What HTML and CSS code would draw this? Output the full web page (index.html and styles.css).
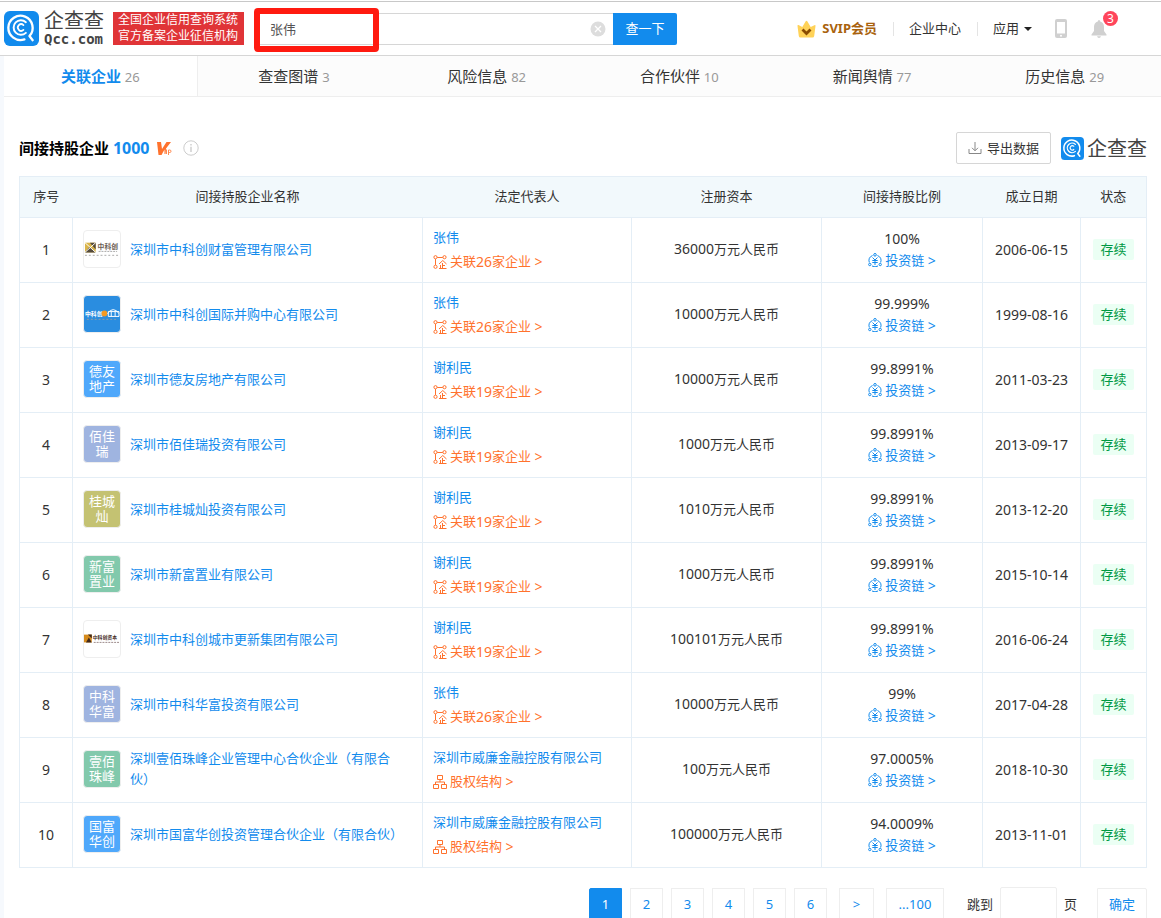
FILE: index.html
```
<!DOCTYPE html>
<html lang="zh-CN">
<head>
  <meta charset="UTF-8">
  <meta name="viewport" content="width=device-width, initial-scale=1.0">
  <title>张伟 - 企查查</title>
  <link rel="stylesheet" href="styles.css">
</head>
<body>
  <svg class="sprite" aria-hidden="true">
    <symbol id="icon-qcc" viewBox="0 0 36 36">
      <rect width="36" height="36" rx="6" fill="#128bed"/>
      <g fill="none" stroke="#fff" stroke-linecap="round">
        <path d="M21 29.200A12.500 12.500 0 1 1 26.200 25.800L29.500 30" stroke-width="2.400" stroke-linejoin="round"/>
        <path d="M22.500 22.500A7.500 7.500 0 1 1 22.500 11.500" stroke-width="2"/>
        <path d="M20 19.500A3.400 3.400 0 1 1 20 14.500" stroke-width="1.800"/>
      </g>
    </symbol>
    <symbol id="icon-relation" viewBox="0 0 14 14">
      <g fill="none" stroke="currentColor">
        <circle cx="2.500" cy="2.200" r="1.600"/>
        <circle cx="11.500" cy="2.200" r="1.600"/>
        <circle cx="2.500" cy="11.800" r="1.600"/>
        <path d="M4.200 2.500H9.800M2.500 4V10M6 9L9.800 5.500L13.500 9M9.500 8V13M9.500 10.500H12M7.500 10V13M6 13.500H13.500"/>
      </g>
    </symbol>
    <symbol id="icon-chain" viewBox="0 0 14 14">
      <g fill="none" stroke="currentColor">
        <path d="M4.500 2.500A5.800 5.800 0 0 0 1.300 9.500M9.500 2.500A5.800 5.800 0 0 1 12.700 9.500M4 13A6 6 0 0 0 10 13"/>
        <circle cx="7" cy="1.800" r="1.300"/>
        <circle cx="1.800" cy="11.500" r="1.200"/>
        <circle cx="12.200" cy="11.500" r="1.200"/>
        <path d="M4.500 4.500L7 7L9.500 4.500M4.300 7.500H9.700M4.300 9.500H9.700M7 7V12"/>
      </g>
    </symbol>
    <symbol id="icon-structure" viewBox="0 0 14 14">
      <path d="M4.500 .5H9.500V4.500H4.500ZM.5 9.500H5.500V13.500H.5ZM8.500 9.500H13.500V13.500H8.500ZM7 4.500V7M2.500 9.500V7H11.500V9.500" fill="none" stroke="currentColor"/>
    </symbol>
  </svg>

  <header class="header">
    <a class="brand" href="#">
      <svg class="brand-icon"><use href="#icon-qcc"/></svg>
      <span class="brand-name">企查查<span class="brand-domain">Qcc.com</span></span>
    </a>
    <div class="slogan">全国企业信用查询系统<br>官方备案企业征信机构</div>

    <form class="search">
      <input class="search-input" type="text" value="张伟" aria-label="搜索">
      <button class="search-clear" type="reset" aria-label="清空">
        <svg viewBox="0 0 16 16"><circle cx="8" cy="8" r="7.500" fill="#ddd"/><path d="M5 5L11 11M11 5L5 11" stroke="#fff" stroke-width="1.300"/></svg>
      </button>
      <button class="search-btn" type="submit">查一下</button>
      <span class="search-mark"></span>
    </form>

    <nav class="nav">
      <a class="nav-vip" href="#">
        <svg viewBox="0 0 19 18">
          <path d="M1.500 5Q.2 4.800 .5 6L1.800 16Q2 17.500 3.500 17.500H15.500Q17 17.500 17.200 16L18.500 6Q18.700 4.700 17.400 5.200L13.700 7L10.300 1.200Q9.500 .3 8.700 1.200L5.300 7Z" fill="#ffd258"/>
          <path d="M5.500 9.500L9.500 13.500L13.500 9.500" fill="none" stroke="#8a4b00" stroke-width="2.800"/>
        </svg>
        SVIP会员
      </a>
      <a class="nav-item" href="#">企业中心</a>
      <a class="nav-item" href="#">应用<i class="caret"></i></a>
      <a class="nav-phone" href="#" aria-label="手机版">
        <svg viewBox="0 0 12 19"><rect width="12" height="19" rx="2" fill="#d0d0d0"/><path d="M2 3H10V14.500H2Z" fill="#fff"/><circle cx="6" cy="16.700" r="1" fill="#fff"/></svg>
      </a>
      <a class="nav-bell" href="#" aria-label="消息">
        <svg viewBox="0 0 16 18"><path d="M8 0Q9.200 0 9.200 1.500Q13 2.600 13 7V11L15.500 14.500V15.500H.5V14.500L3 11V7Q3 2.600 6.800 1.500Q6.800 0 8 0ZM6 16.300H10Q9.500 18 8 18Q6.500 18 6 16.300Z" fill="#d0d0d0"/></svg>
        <span class="badge">3</span>
      </a>
    </nav>
  </header>

  <div class="page">
    <nav class="tabs">
      <a class="tab active" href="#">关联企业 <span>26</span></a>
      <a class="tab" href="#">查查图谱 <span>3</span></a>
      <a class="tab" href="#">风险信息 <span>82</span></a>
      <a class="tab" href="#">合作伙伴 <span>10</span></a>
      <a class="tab" href="#">新闻舆情 <span>77</span></a>
      <a class="tab" href="#">历史信息 <span>29</span></a>
    </nav>

    <main class="content">
      <div class="title-row">
        <h2 class="title">间接持股企业 <span class="total">1000</span></h2>
        <svg class="vip-icon" viewBox="0 0 15 15">
          <path d="M0 1H4L5 8L9.500 1H14L9 7.500L8.500 13H7.500V8.500L4.500 14H1.500Z" fill="#ff722d"/>
          <path d="M9.500 8.500V13M11.500 14V9H12.800Q14 9 14 10.300Q14 11.500 12.800 11.500H11.500" fill="none" stroke="#ff8a50"/>
        </svg>
        <svg class="info-icon" viewBox="0 0 16 16">
          <circle cx="8" cy="8" r="7.200" fill="none" stroke="#ccc"/>
          <path d="M8 4V5.500M8 6.800V12" stroke="#ccc" stroke-width="1.400"/>
        </svg>
        <button class="export" type="button">
          <svg viewBox="0 0 14 14"><path d="M1 8V12.500H13V8M7 1V9.500M4 6.800L7 9.800L10 6.800" fill="none" stroke="#888"/></svg>
          导出数据
        </button>
        <div class="watermark"><svg><use href="#icon-qcc"/></svg>企查查</div>
      </div>

      <table class="table">
        <colgroup>
          <col class="col-index"><col><col class="col-person"><col class="col-capital">
          <col class="col-ratio"><col class="col-date"><col class="col-status">
        </colgroup>
        <thead>
          <tr>
            <th>序号</th>
            <th>间接持股企业名称</th>
            <th>法定代表人</th>
            <th>注册资本</th>
            <th>间接持股比例</th>
            <th>成立日期</th>
            <th>状态</th>
          </tr>
        </thead>
        <tbody>
          <tr>
            <td class="num">1</td>
            <td><div class="company">
              <span class="logo logo-image">
                <svg viewBox="0 0 37 37">
                  <rect x="1" y="12" width="11" height="10" fill="#d9b44a"/>
                  <path d="M1 22L6 16L12 22ZM6 12L12 19V12Z" fill="#554b3c"/>
                  <path d="M1 12L12 22M12 12L1 22" stroke="#fff"/>
                  <text x="14" y="18" font-size="7" font-weight="700" fill="#6c6055">中科创</text>
                  <path d="M15 21H34" stroke="#aaa" stroke-dasharray="2 1"/>
                  <path d="M1 25H35" stroke="#aaa" stroke-dasharray="2 2"/>
                </svg>
              </span>
              <a href="#">深圳市中科创财富管理有限公司</a>
            </div></td>
            <td class="person"><a href="#">张伟</a><a class="more" href="#"><svg><use href="#icon-relation"/></svg>关联<span class="num">26</span>家企业 <span class="num">&gt;</span></a></td>
            <td><span class="num">36000</span>万元人民币</td>
            <td class="ratio"><span class="num">100%</span><a href="#"><svg><use href="#icon-chain"/></svg>投资链 <span class="num">&gt;</span></a></td>
            <td class="num">2006-06-15</td>
            <td><span class="tag">存续</span></td>
          </tr>
          <tr>
            <td class="num">2</td>
            <td><div class="company">
              <span class="logo logo-navy">
                <svg viewBox="0 0 37 37">
                  <text x="1" y="21" font-size="6" font-weight="700" fill="#fff">中科创</text>
                  <circle cx="21" cy="18" r="3" fill="#f59a23"/>
                  <path d="M24 18Q30 10 36 18M25 16H36V21H25ZM28 16V21M32 16V21" fill="none" stroke="#fff"/>
                  <path d="M3 24H35" stroke="#8b9ba5" stroke-dasharray="2 2"/>
                </svg>
              </span>
              <a href="#">深圳市中科创国际并购中心有限公司</a>
            </div></td>
            <td class="person"><a href="#">张伟</a><a class="more" href="#"><svg><use href="#icon-relation"/></svg>关联<span class="num">26</span>家企业 <span class="num">&gt;</span></a></td>
            <td><span class="num">10000</span>万元人民币</td>
            <td class="ratio"><span class="num">99.999%</span><a href="#"><svg><use href="#icon-chain"/></svg>投资链 <span class="num">&gt;</span></a></td>
            <td class="num">1999-08-16</td>
            <td><span class="tag">存续</span></td>
          </tr>
          <tr>
            <td class="num">3</td>
            <td><div class="company"><span class="logo logo-blue">德友<br>地产</span><a href="#">深圳市德友房地产有限公司</a></div></td>
            <td class="person"><a href="#">谢利民</a><a class="more" href="#"><svg><use href="#icon-relation"/></svg>关联<span class="num">19</span>家企业 <span class="num">&gt;</span></a></td>
            <td><span class="num">10000</span>万元人民币</td>
            <td class="ratio"><span class="num">99.8991%</span><a href="#"><svg><use href="#icon-chain"/></svg>投资链 <span class="num">&gt;</span></a></td>
            <td class="num">2011-03-23</td>
            <td><span class="tag">存续</span></td>
          </tr>
          <tr>
            <td class="num">4</td>
            <td><div class="company"><span class="logo logo-purple">佰佳<br>瑞</span><a href="#">深圳市佰佳瑞投资有限公司</a></div></td>
            <td class="person"><a href="#">谢利民</a><a class="more" href="#"><svg><use href="#icon-relation"/></svg>关联<span class="num">19</span>家企业 <span class="num">&gt;</span></a></td>
            <td><span class="num">1000</span>万元人民币</td>
            <td class="ratio"><span class="num">99.8991%</span><a href="#"><svg><use href="#icon-chain"/></svg>投资链 <span class="num">&gt;</span></a></td>
            <td class="num">2013-09-17</td>
            <td><span class="tag">存续</span></td>
          </tr>
          <tr>
            <td class="num">5</td>
            <td><div class="company"><span class="logo logo-olive">桂城<br>灿</span><a href="#">深圳市桂城灿投资有限公司</a></div></td>
            <td class="person"><a href="#">谢利民</a><a class="more" href="#"><svg><use href="#icon-relation"/></svg>关联<span class="num">19</span>家企业 <span class="num">&gt;</span></a></td>
            <td><span class="num">1010</span>万元人民币</td>
            <td class="ratio"><span class="num">99.8991%</span><a href="#"><svg><use href="#icon-chain"/></svg>投资链 <span class="num">&gt;</span></a></td>
            <td class="num">2013-12-20</td>
            <td><span class="tag">存续</span></td>
          </tr>
          <tr>
            <td class="num">6</td>
            <td><div class="company"><span class="logo logo-green">新富<br>置业</span><a href="#">深圳市新富置业有限公司</a></div></td>
            <td class="person"><a href="#">谢利民</a><a class="more" href="#"><svg><use href="#icon-relation"/></svg>关联<span class="num">19</span>家企业 <span class="num">&gt;</span></a></td>
            <td><span class="num">1000</span>万元人民币</td>
            <td class="ratio"><span class="num">99.8991%</span><a href="#"><svg><use href="#icon-chain"/></svg>投资链 <span class="num">&gt;</span></a></td>
            <td class="num">2015-10-14</td>
            <td><span class="tag">存续</span></td>
          </tr>
          <tr>
            <td class="num">7</td>
            <td><div class="company">
              <span class="logo logo-image">
                <svg viewBox="0 0 37 37">
                  <path d="M0 14H8V22H0Z" fill="#d58a1c"/>
                  <path d="M2 22L5 17L8 22ZM4 14L8 18V14Z" fill="#40291c"/>
                  <text x="9" y="19" font-size="5" font-weight="700" fill="#40291c">中科创资本</text>
                  <path d="M10 22H37" stroke="#988" stroke-dasharray="2 1"/>
                </svg>
              </span>
              <a href="#">深圳市中科创城市更新集团有限公司</a>
            </div></td>
            <td class="person"><a href="#">谢利民</a><a class="more" href="#"><svg><use href="#icon-relation"/></svg>关联<span class="num">19</span>家企业 <span class="num">&gt;</span></a></td>
            <td><span class="num">100101</span>万元人民币</td>
            <td class="ratio"><span class="num">99.8991%</span><a href="#"><svg><use href="#icon-chain"/></svg>投资链 <span class="num">&gt;</span></a></td>
            <td class="num">2016-06-24</td>
            <td><span class="tag">存续</span></td>
          </tr>
          <tr>
            <td class="num">8</td>
            <td><div class="company"><span class="logo logo-purple">中科<br>华富</span><a href="#">深圳市中科华富投资有限公司</a></div></td>
            <td class="person"><a href="#">张伟</a><a class="more" href="#"><svg><use href="#icon-relation"/></svg>关联<span class="num">26</span>家企业 <span class="num">&gt;</span></a></td>
            <td><span class="num">10000</span>万元人民币</td>
            <td class="ratio"><span class="num">99%</span><a href="#"><svg><use href="#icon-chain"/></svg>投资链 <span class="num">&gt;</span></a></td>
            <td class="num">2017-04-28</td>
            <td><span class="tag">存续</span></td>
          </tr>
          <tr>
            <td class="num">9</td>
            <td><div class="company"><span class="logo logo-green">壹佰<br>珠峰</span><a href="#">深圳壹佰珠峰企业管理中心合伙企业（有限合伙）</a></div></td>
            <td class="person"><a href="#">深圳市威廉金融控股有限公司</a><a class="more" href="#"><svg><use href="#icon-structure"/></svg>股权结构 <span class="num">&gt;</span></a></td>
            <td><span class="num">100</span>万元人民币</td>
            <td class="ratio"><span class="num">97.0005%</span><a href="#"><svg><use href="#icon-chain"/></svg>投资链 <span class="num">&gt;</span></a></td>
            <td class="num">2018-10-30</td>
            <td><span class="tag">存续</span></td>
          </tr>
          <tr>
            <td class="num">10</td>
            <td><div class="company"><span class="logo logo-blue">国富<br>华创</span><a href="#">深圳市国富华创投资管理合伙企业（有限合伙）</a></div></td>
            <td class="person"><a href="#">深圳市威廉金融控股有限公司</a><a class="more" href="#"><svg><use href="#icon-structure"/></svg>股权结构 <span class="num">&gt;</span></a></td>
            <td><span class="num">100000</span>万元人民币</td>
            <td class="ratio"><span class="num">94.0009%</span><a href="#"><svg><use href="#icon-chain"/></svg>投资链 <span class="num">&gt;</span></a></td>
            <td class="num">2013-11-01</td>
            <td><span class="tag">存续</span></td>
          </tr>
        </tbody>
      </table>

      <div class="pagination">
        <a class="page-link current" href="#">1</a>
        <a class="page-link" href="#">2</a>
        <a class="page-link" href="#">3</a>
        <a class="page-link" href="#">4</a>
        <a class="page-link" href="#">5</a>
        <a class="page-link" href="#">6</a>
        <a class="page-link page-next" href="#">&gt;</a>
        <a class="page-link page-last" href="#">...100</a>
        <label class="jump">跳到 <input type="text"> 页</label>
        <button class="page-link page-go" type="button">确定</button>
      </div>
    </main>
  </div>
</body>
</html>
```
FILE: styles.css
```
:root {
  --primary: #128bed;
  --orange: #ff722d;
  --line: #e4eef6;
  --border: #d6d6d6;
  --text: #333;
}

* {
  margin: 0;
  padding: 0;
  box-sizing: border-box;
}

html {
  scrollbar-width: none;
}

body {
  font-family: "Noto Sans", "Noto Sans CJK SC", sans-serif;
  font-size: 13px;
  line-height: 21px;
  color: var(--text);
  background: #fff;
}

a {
  color: var(--primary);
  text-decoration: none;
}

button,
input {
  font: inherit;
  color: inherit;
}

button {
  cursor: pointer;
}

svg {
  display: block;
  flex: none;
}

.sprite {
  position: absolute;
  width: 0;
  height: 0;
}

/* header */
.header {
  display: flex;
  align-items: center;
  height: 55px;
  margin-top: 1px;
  padding: 0 54px 0 4px;
  border-top: 1px solid #c8c8c8;
  border-bottom: 1px solid var(--border);
}

.brand {
  display: flex;
  align-items: center;
  gap: 5px;
  color: #444;
}

.brand-icon {
  width: 35px;
  height: 35px;
}

.brand-name {
  font-size: 20px;
  line-height: 20px;
}

.brand-domain {
  display: block;
  font: bold 14px/16px "DejaVu Sans Mono", monospace;
}

.slogan {
  margin-left: 9px;
  padding: 0 6px 1px 5px;
  background: #e03437;
  color: #fff;
  font-size: 12px;
  line-height: 16px;
}

.search {
  position: relative;
  display: flex;
  width: 420px;
  margin-left: 13px;
}

.search-input {
  flex: 1;
  min-width: 0;
  height: 32px;
  padding: 0 12px;
  border: 1px solid var(--border);
  border-right: 0;
  outline: 0;
  color: #555;
}

.search-clear {
  position: absolute;
  top: 8px;
  right: 71px;
  width: 16px;
  height: 16px;
  border: 0;
  background: none;
}

.search-btn {
  width: 64px;
  height: 32px;
  border: 0;
  border-radius: 0 2px 2px 0;
  background: var(--primary);
  color: #fff;
}

/* highlight drawn around the keyword */
.search-mark {
  position: absolute;
  top: -5px;
  left: -3px;
  width: 125px;
  height: 44px;
  border: 6px solid #ff1a10;
  border-radius: 4px;
  pointer-events: none;
}

.nav {
  display: flex;
  align-items: center;
  margin-left: auto;
}

.nav-vip {
  display: flex;
  align-items: center;
  gap: 6px;
  color: #a9620d;
  font-weight: bold;
}

.nav-vip svg {
  width: 19px;
  height: 18px;
}

.nav-item {
  display: flex;
  align-items: center;
  position: relative;
  margin-left: 32px;
  color: var(--text);
}

.nav-item::before {
  content: "";
  position: absolute;
  left: -16px;
  width: 1px;
  height: 14px;
  background: #e4e4e4;
}

.caret {
  margin-left: 5px;
  border: 4px solid transparent;
  border-top-color: #222;
  border-bottom: 0;
}

.nav-phone {
  margin-left: 23px;
}

.nav-phone svg {
  width: 12px;
  height: 19px;
}

.nav-bell {
  position: relative;
  margin-left: 24px;
}

.nav-bell svg {
  width: 16px;
  height: 18px;
}

.badge {
  position: absolute;
  top: -9px;
  right: -11px;
  width: 15px;
  height: 15px;
  border-radius: 50%;
  background: #ff455b;
  color: #fff;
  font-size: 12px;
  line-height: 15px;
  text-align: center;
}

/* tabs */
.page {
  border-left: 4px solid #f6f9fd;
}

.tabs {
  display: flex;
  height: 41px;
  background: #fcfcfc;
  border-bottom: 1px solid #eee;
}

.tab {
  flex: 1;
  color: var(--text);
  font-size: 15px;
  line-height: 40px;
  text-align: center;
}

.tab span {
  color: #999;
  font-size: 13px;
  font-weight: normal;
}

.tab.active {
  background: #fff;
  border-right: 1px solid #eee;
  color: var(--primary);
  font-weight: bold;
}

/* list */
.content {
  padding: 35px 14px 0 15px;
}

.title-row {
  display: flex;
  align-items: center;
  margin-bottom: 12px;
}

.title {
  color: #000;
  font-size: 15px;
}

.total {
  color: var(--primary);
  font-size: 16px;
}

.vip-icon {
  width: 15px;
  height: 15px;
  margin-left: 7px;
}

.info-icon {
  width: 16px;
  height: 16px;
  margin-left: 11px;
}

.export {
  display: flex;
  align-items: center;
  gap: 5px;
  height: 32px;
  margin-left: auto;
  padding: 0 11px;
  border: 1px solid var(--border);
  border-radius: 2px;
  background: #fff;
}

.export svg {
  width: 14px;
  height: 14px;
}

.watermark {
  display: flex;
  align-items: center;
  gap: 3px;
  margin-left: 10px;
  color: #444;
  font-size: 20px;
}

.watermark svg {
  width: 23px;
  height: 23px;
}

.table {
  width: 100%;
  table-layout: fixed;
  border-collapse: collapse;
  text-align: center;
}

.col-index { width: 53px; }
.col-person { width: 209px; }
.col-capital { width: 190px; }
.col-ratio { width: 161px; }
.col-date { width: 98px; }
.col-status { width: 66px; }

.table th {
  height: 41px;
  padding-bottom: 2px;
  background: #f2f9fc;
  border-bottom: 1px solid var(--line);
  font-weight: normal;
}

.table thead tr {
  border: 1px solid var(--line);
}

.table td {
  height: 65px;
  padding-bottom: 2px;
  border: 1px solid var(--line);
}

.num {
  font-size: 14px;
}

.company {
  display: flex;
  align-items: center;
  gap: 9px;
  padding: 0 20px 0 10px;
  text-align: left;
}

.logo {
  flex: none;
  width: 38px;
  height: 38px;
  padding: 3px 0;
  border: 1px solid #eee;
  border-radius: 4px;
  color: #fff;
  line-height: 15px;
  text-align: center;
}

.logo svg {
  width: 36px;
  height: 36px;
}

.logo-image,
.logo-navy {
  padding: 0;
}

.logo-navy { background: #2a8de0; }
.logo-blue { background: #4fa8fb; }
.logo-purple { background: #9fb4e0; }
.logo-olive { background: #c4c272; }
.logo-green { background: #82c9ac; }

.table .person {
  padding: 0 10px 1px;
  text-align: left;
}

.person a {
  display: flex;
  align-items: center;
  height: 24px;
  white-space: pre;
}

.person .more {
  color: var(--orange);
}

.person svg,
.ratio svg {
  width: 14px;
  height: 14px;
  margin-right: 3px;
}

.ratio a {
  display: flex;
  align-items: center;
  justify-content: center;
  white-space: pre;
}

.tag {
  display: inline-block;
  padding: 0 7px;
  border-radius: 2px;
  background: #ebfff4;
  color: #094;
}

/* pagination */
.pagination {
  display: flex;
  justify-content: flex-end;
  align-items: center;
  gap: 8px;
  margin-top: 19px;
}

.page-link {
  min-width: 33px;
  height: 32px;
  border: 1px solid #eee;
  background: #fff;
  color: var(--primary);
  line-height: 31px;
  text-align: center;
}

.page-link.current {
  border-color: var(--primary);
  border-radius: 2px 0 0 2px;
  background: var(--primary);
  color: #fff;
}

.page-next {
  width: 35px;
  margin-left: 4px;
}

.page-last {
  width: 58px;
  margin-left: 4px;
}

.page-go {
  width: 50px;
  margin-left: 12px;
  border-radius: 0 2px 2px 0;
}

.jump {
  display: flex;
  align-items: center;
  gap: 7px;
  margin-left: 15px;
}

.jump input {
  width: 57px;
  height: 34px;
  border: 1px solid #eee;
  border-radius: 2px;
  outline: 0;
}
```
